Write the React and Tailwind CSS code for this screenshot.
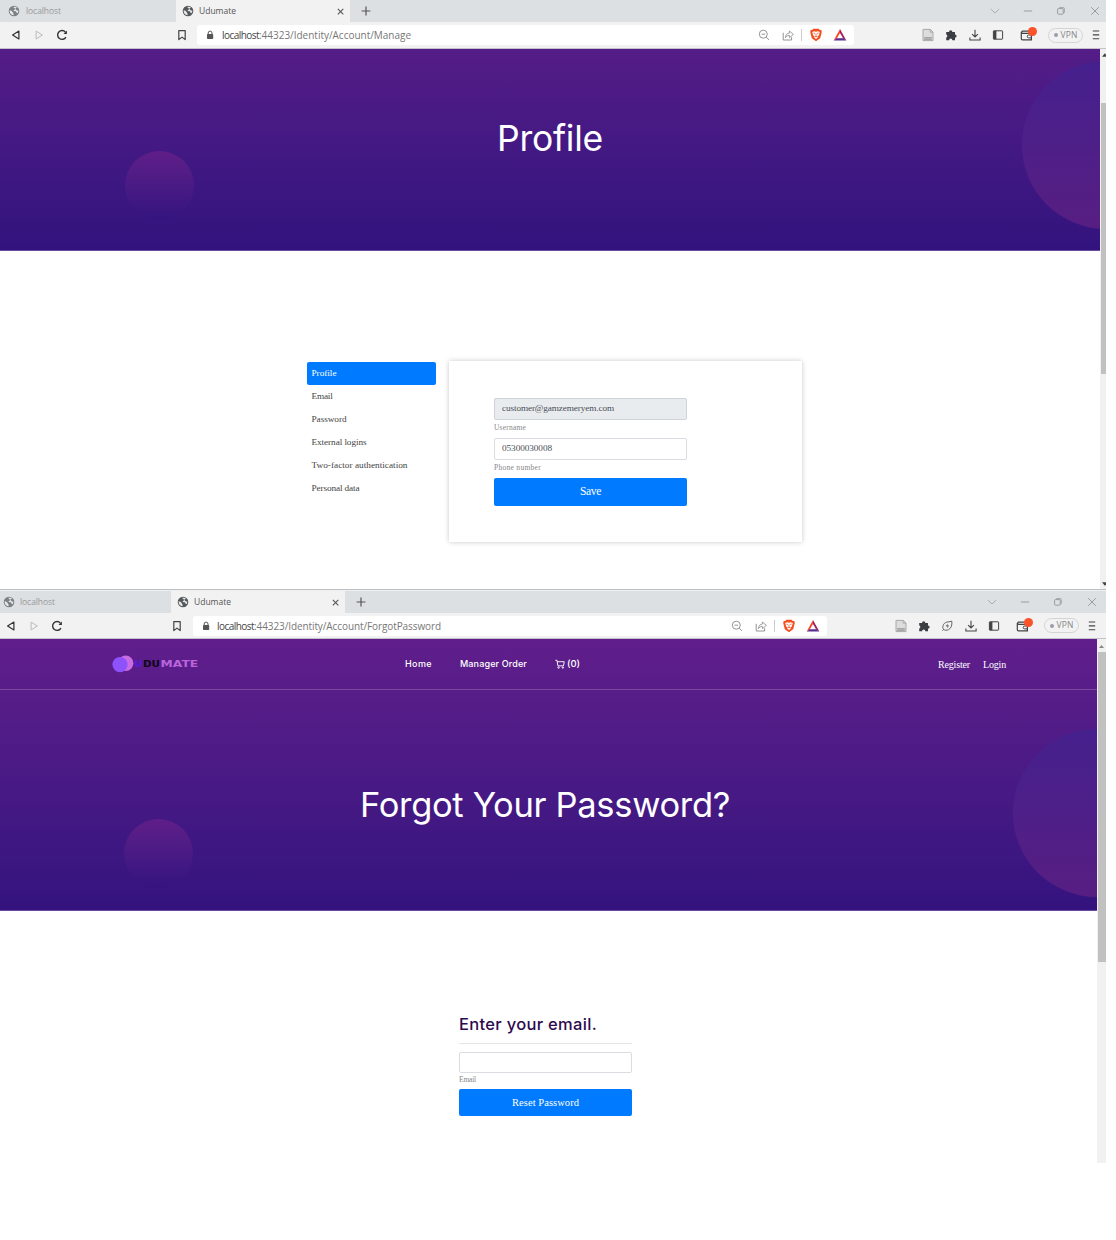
import React, { useLayoutEffect, useRef, useState } from "react";

/* Text set to a given width by spreading its letters evenly. */
function Fit({ w, className = "", children }) {
  const ref = useRef(null);
  const [spacing, setSpacing] = useState(0);
  useLayoutEffect(() => {
    const natural = ref.current.getBoundingClientRect().width;
    setSpacing((w - natural) / String(children).length);
  }, [w, children]);
  return (
    <span ref={ref} className={`inline-block whitespace-nowrap ${className}`} style={{ letterSpacing: `${spacing}px` }}>
      {children}
    </span>
  );
}

function Icon({ children, className = "w-[14px] h-[14px]" }) {
  return (
    <svg viewBox="0 0 14 14" fill="none" className={`block shrink-0 ${className}`}>
      {children}
    </svg>
  );
}

const Globe = ({ color }) => (
  <Icon className="h-[12px] w-[12px]">
    <circle cx="7" cy="7" r="6.2" fill={color} />
    <path d="M2 6.2 C3.6 6.6 5 7.2 5.4 8.2 C5.8 9.4 7 9.8 6.4 12 C3.8 11.8 1.6 9.6 2 6.2Z M6 2.2 C8 1.6 9.6 2 10.4 2.9 C9.8 4 8.4 3.8 8.2 4.8 C8 5.8 6.4 5.8 6.6 7 L9 7.2 C10 7.6 9.6 9 10.6 9.6 C11.6 9 12.2 7.8 12 6.4 C11 6.6 10 6.2 9.6 5.4" fill="#e6e8ea" />
  </Icon>
);
const Back = () => <Icon><path d="M9.9 3.1 V11 L3.6 7 Z" stroke="#333" strokeWidth="1.2" strokeLinejoin="round" /></Icon>;
const Forward = () => <Icon><path d="M4.1 3.1 V11 L10.3 7 Z" stroke="#bbb" strokeWidth="1" strokeLinejoin="round" /></Icon>;
const Reload = () => (
  <Icon>
    <path d="M10.9 9.1 A4.4 4.4 0 1 1 10.4 4.1" stroke="#333" strokeWidth="1.4" />
    <path d="M11.9 2.4 V6 H8.5 Z" fill="#333" />
  </Icon>
);
const Bookmark = () => <Icon><path d="M3.8 2.6 H10.2 V11.6 L7 9.1 L3.8 11.6 Z" stroke="#444" strokeWidth="1.2" strokeLinejoin="round" /></Icon>;
const Lock = () => (
  <Icon>
    <rect x="4" y="6" width="6.2" height="5" rx=".7" fill="#555" />
    <path d="M5.2 6.2 V5 A1.9 1.9 0 0 1 9 5 V6.2" stroke="#555" strokeWidth="1" />
  </Icon>
);
const ZoomOut = () => (
  <Icon>
    <circle cx="6.3" cy="6.2" r="4" stroke="#888" strokeWidth=".9" />
    <path d="M4.5 6.2 H8.1 M9.2 9.1 L12 11.9" stroke="#888" strokeWidth=".9" />
  </Icon>
);
const Share = () => (
  <Icon>
    <path d="M2.2 4.8 V12 H10.6 V9.2" stroke="#888" strokeWidth=".9" />
    <path d="M4.4 9.6 C4.6 6.6 6.2 5.2 8.4 5.1 V3 L12.4 6.4 L8.4 9.6 V7.4 C6.6 7.4 5.4 8 4.4 9.6Z" stroke="#888" strokeWidth=".8" strokeLinejoin="round" />
  </Icon>
);
const Brave = () => (
  <Icon>
    <path d="M4.4 .8 H9.6 L10.9 2.1 L12.3 2 L12.8 4 L11.2 10.2 L7 13.3 L2.8 10.2 L1.2 4 L1.7 2 L3.1 2.1 Z" fill="#f4501f" />
    <path d="M3.2 4 L5.2 3.2 L7 3.7 L8.8 3.2 L10.8 4 L9.8 7.4 L8.4 8.5 L8.8 9.6 L7 11 L5.2 9.6 L5.6 8.5 L4.2 7.4 Z" fill="#fff" />
    <path d="M4.4 5 L6.2 5.6 M9.6 5 L7.8 5.6 M7 6 V8.3 M5.8 8.2 L7 8.8 L8.2 8.2" stroke="#f4501f" strokeWidth=".8" />
  </Icon>
);
const Bat = () => (
  <Icon>
    <path d="M7 .9 L.7 12.4 L3.8 10.6 L7 5 Z" fill="#ff4724" />
    <path d="M7 .9 L13.3 12.4 L10.2 10.6 L7 5 Z" fill="#9e1f63" />
    <path d="M.7 12.4 H13.3 L10.2 10.3 H3.8 Z" fill="#5b2d91" />
  </Icon>
);
const Notes = () => (
  <Icon>
    <path d="M2 1.4 H9.4 L12 4 V12.6 H2 Z" fill="#dcdcdc" stroke="#a2a2a2" strokeWidth=".9" />
    <path d="M9.2 1.4 V4.2 H12" stroke="#a2a2a2" strokeWidth=".8" />
    <path d="M3.2 9.8 H10.8 M3.2 11.2 H10.8" stroke="#8d8d8d" strokeWidth="1" />
  </Icon>
);
const Puzzle = () => (
  <Icon>
    <path d="M2.2 4 H5 A1.7 1.7 0 1 1 8.4 4 H11 V6.5 A1.6 1.6 0 1 1 11 9.7 V12.2 H8.3 A1.6 1.6 0 0 0 5.1 12.2 H2.2 V9.4 A1.5 1.5 0 0 0 2.2 6.5Z" fill="#3b3f44" />
  </Icon>
);
const Leaf = () => (
  <Icon>
    <path d="M2.4 11.8 L3.6 10.4 C1.8 7.8 3.4 4.2 6.4 3.2 C8.4 2.5 10 3 11.8 2.2 C12.2 6 11.4 9.2 8.6 10.6 C6.6 11.6 4.8 11.4 3.6 10.4" stroke="#555" strokeWidth=".9" />
    <path d="M8 4.4 L5.6 7.3 H7.5 L6.6 9.4 L9.3 6.4 H7.3Z" fill="#555" />
  </Icon>
);
const Download = () => <Icon><path d="M7 1.8 V8.8 M4.1 6.1 L7 9 L9.9 6.1 M1.9 9.4 V12 H12.1 V9.4" stroke="#444" strokeWidth="1.1" /></Icon>;
const Sidebar = () => (
  <Icon>
    <rect x="2.4" y="2.8" width="9.2" height="8.4" rx=".6" stroke="#444" strokeWidth="1" />
    <rect x="2.4" y="2.8" width="3" height="8.4" fill="#444" />
  </Icon>
);
const Wallet = () => (
  <div className="relative h-[14px] w-[16px] shrink-0">
    <Icon>
      <path d="M11.5 5.2 V3.1 H3.4 A1.2 1.2 0 0 0 3.4 5.3 H12.4 V11.8 H3.6 A1.3 1.3 0 0 1 2.3 10.5 V4" stroke="#444" strokeWidth="1.2" />
      <path d="M12.6 7 H9.7 A1.4 1.4 0 0 0 9.7 9.9 H12.6" stroke="#444" strokeWidth="1" />
    </Icon>
    <div className="absolute -right-[2px] -top-[1px] h-[9px] w-[9px] rounded-full bg-[#fb542b]" />
  </div>
);
const Menu = () => <Icon><path d="M3.8 3 H10.2 M3.8 6.9 H10.2 M3.8 10.8 H10.2" stroke="#444" strokeWidth="1.1" /></Icon>;

const WindowControls = ({ className }) => (
  <div className={`ml-auto flex items-center ${className}`}>
    <Icon className="h-[14px] w-[14px]"><path d="M2.8 5 L7 9 L11.2 5" stroke="#aaaeb1" strokeWidth="1" /></Icon>
    <Icon className="ml-[19px] h-[14px] w-[14px]"><path d="M2.8 7 H11.2" stroke="#999da0" strokeWidth="1" /></Icon>
    <Icon className="ml-[19px] h-[14px] w-[14px]">
      <rect x="3.6" y="4.6" width="5.6" height="5.6" rx=".8" stroke="#999da0" strokeWidth="1" />
      <path d="M5 4.2 A.9 .9 0 0 1 5.8 3.6 H9.2 A1 1 0 0 1 10.3 4.7 V8.3 A.9 .9 0 0 1 9.6 9.2" stroke="#999da0" strokeWidth=".9" />
    </Icon>
    <Icon className="ml-[20px] h-[14px] w-[14px]"><path d="M3.2 3.2 L10.8 10.8 M10.8 3.2 L3.2 10.8" stroke="#999da0" strokeWidth="1" /></Icon>
  </div>
);

function BrowserChrome({ url, urlWidth, compact }) {
  return (
    <div className="font-['Open_Sans','Noto_Sans',sans-serif]">
      <div className="flex h-[22px] bg-[#dce0e3] text-[8.5px]">
        <div className={`flex shrink-0 items-center ${compact ? "w-[171px] pl-[3px]" : "w-[176px] pl-[8px]"}`}>
          <Globe color="#7d8184" />
          <Fit w={35} className={compact ? "ml-[5px] text-[#999]" : "ml-[6px] text-[#999]"}>localhost</Fit>
        </div>
        <div className="flex w-[174px] shrink-0 items-center bg-[#f2f2f2] pl-[6px] pr-[4px]">
          <Globe color="#55595c" />
          <Fit w={37} className="ml-[5px] text-[#555]">Udumate</Fit>
          <Icon className="ml-auto h-[11px] w-[11px]"><path d="M3.6 3.6 L10.6 10.6 M10.6 3.6 L3.6 10.6" stroke="#555" strokeWidth="1.4" /></Icon>
        </div>
        <Icon className="ml-[9px] mt-[4px] h-[14px] w-[14px]"><path d="M7 2.6 V11.4 M2.6 7 H11.4" stroke="#555" strokeWidth="1.2" /></Icon>
        <WindowControls className={compact ? "pr-[7px]" : "pr-[4px]"} />
      </div>
      <div className={`flex items-center border-b border-[#c4c1c8] bg-[#f2f2f2] ${compact ? "h-[26px] pl-[4px]" : "h-[27px] pl-[9px]"}`}>
        <div className="flex gap-[9px]"><Back /><Forward /><Reload /></div>
        <div className="ml-[106px]"><Bookmark /></div>
        <div className={`flex h-[20px] shrink-0 items-center rounded-[3px] bg-white pl-[6px] pr-[7px] ${compact ? "ml-[9px] w-[634px]" : "ml-[8px] w-[657px]"}`}>
          <Lock />
          <div className={`text-[10px] leading-[18px] text-[#777] ${compact ? "ml-[4px]" : "ml-[5px]"}`}>
            <Fit w={37} className="text-[#444]">localhost</Fit>
            <Fit w={urlWidth - 37}>{url}</Fit>
          </div>
          <div className="ml-auto flex items-center">
            <ZoomOut />
            <span className="w-[10px]" />
            <Share />
            <div className="ml-[6px] mr-[7px] h-[12px] w-px bg-[#ccc]" />
            <Brave />
            <span className="w-[10px]" />
            <Bat />
          </div>
        </div>
        <div className="ml-[67px] flex gap-[9px]">
          <Notes />
          <Puzzle />
          {compact && <Leaf />}
        </div>
        <div className="ml-[9.5px] flex items-center">
          <Download />
          <span className="w-[9.5px]" />
          <Sidebar />
          <span className="w-[14px]" />
          <Wallet />
        </div>
        <div className="ml-[13px] flex h-[15px] w-[35px] shrink-0 items-center justify-center gap-[3px] rounded-full border border-[#d4d4d4] text-[8.5px] leading-none text-[#888]">
          <span className="h-[4px] w-[4px] rounded-full bg-[#9a9cb0]" />
          <Fit w={17}>VPN</Fit>
        </div>
        <div className="ml-[6px]"><Menu /></div>
      </div>
    </div>
  );
}

const Circles = ({ small, big }) => (
  <>
    <div className={`absolute h-[69px] w-[69px] rounded-full bg-linear-to-b from-[#601e89] to-[#34137f] ${small}`} />
    <div className={`absolute h-[168px] w-[168px] rounded-full bg-linear-to-b from-[#45208d] via-[#4e1f88] to-[#571e82] ${big}`} />
  </>
);

const accountLinks = [
  ["Profile", 25],
  ["Email", 21],
  ["Password", 35],
  ["External logins", 55],
  ["Two-factor authentication", 96],
  ["Personal data", 48],
];

function ProfileWindow() {
  return (
    <section className="flex h-[589px] flex-col">
      <BrowserChrome url=":44323/Identity/Account/Manage" urlWidth={189} />
      <div className="flex flex-1">
        <div className="w-[1100px] font-['Liberation_Serif',serif]">
          <div className="relative flex h-[202px] justify-center overflow-hidden border-b border-[#6b4ba0] bg-linear-to-b from-[#541c87] to-[#32137e] pt-[65px]">
            <Circles small="left-[125px] top-[102px]" big="left-[1022px] top-[12px]" />
            <h1 className="font-['Inter',sans-serif] text-[35.5px] leading-[50px] text-white">
              <Fit w={106}>Profile</Fit>
            </h1>
          </div>
          <div className="flex pl-[307px] pt-[110px]">
            <nav className="w-[129px] pt-px text-[9.25px] text-[#444]">
              {accountLinks.map(([label, w], i) => (
                <div key={label} className={`mb-[0.1px] flex h-[23px] items-center rounded-[2px] pl-[4.5px] ${i === 0 ? "bg-[#007bff] text-white" : ""}`}>
                  <Fit w={w}>{label}</Fit>
                </div>
              ))}
            </nav>
            <div className="ml-[13px] h-[181px] w-[353px] bg-white pl-[45px] pt-[37px] shadow-[0_0_5px_rgba(0,0,0,0.22)]">
              <div className="w-[193px]">
                <div className="flex h-[22px] items-center rounded-[2px] border border-[#ced4da] bg-[#e9ecef] pl-[7px] text-[9.25px] text-[#495057]">
                  <Fit w={112}>customer@gamzemeryem.com</Fit>
                </div>
                <div className="h-[18px] text-[7.5px] leading-[15px] text-[#888]"><Fit w={32}>Username</Fit></div>
                <div className="flex h-[22px] items-center rounded-[2px] border border-[#d9dde1] bg-white pb-px pl-[7px] text-[9.25px] text-[#495057]">
                  <Fit w={50}>05300030008</Fit>
                </div>
                <div className="h-[18px] text-[7.5px] leading-[15px] text-[#888]"><Fit w={47}>Phone number</Fit></div>
                <button className="block h-[28px] w-full rounded-[2px] bg-[#007bff] text-[11.5px] text-white"><Fit w={21}>Save</Fit></button>
              </div>
            </div>
          </div>
        </div>
        <div className="flex w-[6px] flex-col items-end overflow-hidden bg-[#f1f1f1]">
          <Icon className="mt-[4px] h-[4px] w-[4px]"><path d="M0 13 L10 1 L14 6 V13Z" fill="#444" /></Icon>
          <div className="mt-[46px] h-[271px] w-[5px] bg-[#c1c1c1]" />
          <Icon className="mb-[3px] mt-auto h-[4px] w-[4px]"><path d="M0 1 L10 13 L14 8 V1Z" fill="#444" /></Icon>
        </div>
      </div>
    </section>
  );
}

const Logo = () => (
  <svg viewBox="0 0 88 18" className="h-[18px] w-[88px] font-['DejaVu_Sans',sans-serif] text-[8.6px] font-bold">
    <circle cx="13.7" cy="8.2" r="7.7" fill="#c96be3" />
    <circle cx="8" cy="9.6" r="7.6" fill="#8d52fb" />
    <text x="22.6" y="12" fill="#571be0" textLength="8" lengthAdjust="spacingAndGlyphs">U</text>
    <text x="31" y="12" fill="#0d0616" textLength="17" lengthAdjust="spacingAndGlyphs">DU</text>
    <text x="48.6" y="12" fill="#b965dc" textLength="37.6" lengthAdjust="spacingAndGlyphs">MATE</text>
  </svg>
);

function ForgotPasswordWindow() {
  return (
    <section className="flex h-[574px] flex-col border-t border-[#bfc0c1]">
      <div className="h-px bg-[#eeeff0]" />
      <BrowserChrome compact url=":44323/Identity/Account/ForgotPassword" urlWidth={224} />
      <div className="flex flex-1">
        <div className="w-[1097px] font-['Liberation_Serif',serif]">
          <div className="relative h-[272px] overflow-hidden border-b border-[#6b4ba0] bg-linear-to-b from-[#601e8b] to-[#34137f]">
            <Circles small="left-[124px] top-[180px]" big="left-[1013px] top-[90px]" />
            <header className="relative flex h-[51px] items-center border-b border-white/20 pl-[112px] pr-[91px] text-white">
              <Logo />
              <div className="ml-[205px] flex items-center font-['Inter',sans-serif] text-[9px] font-medium">
                <Fit w={27}>Home</Fit>
                <Fit w={67} className="ml-[28px]">Manager Order</Fit>
                <svg viewBox="0 0 14 14" fill="none" stroke="#fff" strokeWidth="1.3" className="ml-[28px] h-[10px] w-[10px]">
                  <path d="M.5 1.8 H2.8 L4 9.6 H11.8 L13 3.8 H3.2" />
                  <circle cx="5" cy="12" r="1" />
                  <circle cx="11" cy="12" r="1" />
                </svg>
                <Fit w={13} className="ml-[2px] text-[9.5px]">(0)</Fit>
              </div>
              <div className="ml-auto flex gap-[13px] text-[10px]">
                <Fit w={32}>Register</Fit>
                <Fit w={23}>Login</Fit>
              </div>
            </header>
            <h1 className="relative mt-[90px] pl-[360px] font-['Inter',sans-serif] text-[34.5px] leading-[50px] text-white">
              <Fit w={370}>Forgot Your Password?</Fit>
            </h1>
          </div>
          <div className="ml-[459px] mt-[101px] w-[173px]">
            <h2 className="h-[32px] border-b border-[#e5e5e5] font-['Inter',sans-serif] text-[16.5px] font-medium leading-[25px] text-[#2d0a4e]">
              <Fit w={138}>Enter your email.</Fit>
            </h2>
            <div className="mt-[8px] h-[21px] rounded-[2px] border border-[#d9dde1] bg-white" />
            <div className="h-[16px] text-[7.5px] leading-[13px] text-[#888]"><Fit w={17}>Email</Fit></div>
            <button className="block h-[27px] w-full rounded-[2px] bg-[#007bff] text-[10.5px] text-white"><Fit w={67}>Reset Password</Fit></button>
          </div>
        </div>
        <div className="flex flex-1 flex-col items-center bg-[#f1f1f1]">
          <Icon className="mt-[5px] h-[5px] w-[5px]"><path d="M0 11 L7 3 L14 11Z" fill="#888" /></Icon>
          <div className="mt-[3px] h-[310px] w-[8px] bg-[#c1c1c1]" />
        </div>
      </div>
    </section>
  );
}

export default function App() {
  return (
    <div className="h-[1240px] w-full bg-white">
      <main className="w-[1106px]">
        <ProfileWindow />
        <ForgotPasswordWindow />
      </main>
    </div>
  );
}
